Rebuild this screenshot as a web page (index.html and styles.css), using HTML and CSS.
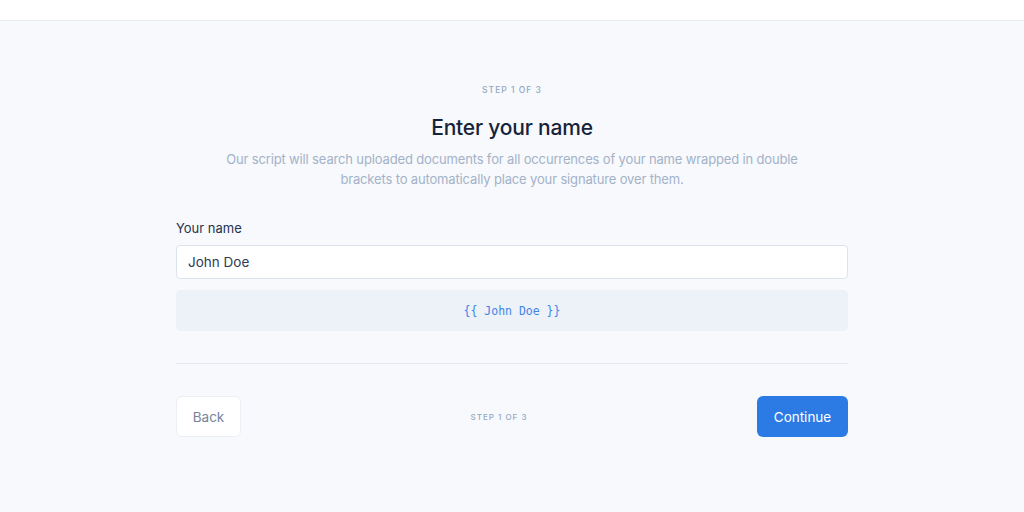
FILE: index.html
```html
<!DOCTYPE html>
<html lang="en">
<head>
<meta charset="utf-8">
<title>Enter your name</title>
<link rel="stylesheet" href="styles.css">
</head>
<body>
<header class="topbar"></header>
<main class="page">
  <section class="card">
    <div class="step">Step 1 of 3</div>
    <h1 class="title">Enter your name</h1>
    <p class="desc">Our script will search uploaded documents for all occurrences of your name wrapped in double brackets to automatically place your signature over them.</p>
    <label class="label" for="name">Your name</label>
    <input class="input" id="name" type="text" value="John Doe">
    <div class="preview">{{ John Doe }}</div>
    <hr class="divider">
    <div class="actions">
      <button class="btn btn-back">Back</button>
      <div class="step step-small">Step 1 of 3</div>
      <button class="btn btn-primary">Continue</button>
    </div>
  </section>
</main>
</body>
</html>
```

FILE: styles.css
```css
* { box-sizing: border-box; }
html, body { margin: 0; padding: 0; }
body {
  background: #f7f9fc;
  font-family: "Inter", "Lato", sans-serif;
  color: #1a2b44;
  height: 512px;
  overflow: hidden;
}
.topbar {
  height: 21px;
  background: #ffffff;
  border-bottom: 1px solid #e6ebf2;
}
.page {
  display: flex;
  justify-content: center;
  padding-top: 63px;
}
.card {
  width: 672px;
  display: flex;
  flex-direction: column;
}
.step {
  text-align: center;
  font-size: 8.5px;
  letter-spacing: 1px;
  text-transform: uppercase;
  color: #94a7c4;
  font-weight: 500;
  line-height: 12px;
}
.title {
  margin: 17px 0 0;
  text-align: center;
  font-size: 21px;
  font-weight: 500;
  line-height: 30px;
  color: #16233b;
  letter-spacing: -0.2px;
}
.desc {
  margin: 7px auto 0;
  max-width: 600px;
  text-align: center;
  font-size: 13px;
  line-height: 19.5px;
  letter-spacing: -0.15px;
  color: #a3b2c9;
  font-weight: 400;
}
.label {
  margin-top: 30px;
  font-size: 13px;
  line-height: 18px;
  color: #26344d;
}
.input {
  margin-top: 8px;
  height: 34px;
  width: 100%;
  border: 1px solid #dbe3ef;
  border-radius: 4px;
  background: #fff;
  padding: 0 11px;
  font-family: inherit;
  font-size: 13.5px;
  color: #2d3a52;
  outline: none;
}
.preview {
  margin-top: 11px;
  height: 41px;
  border-radius: 5px;
  background: #edf1f8;
  display: flex;
  align-items: center;
  justify-content: center;
  font-family: "DejaVu Sans Mono", "Liberation Mono", monospace;
  font-size: 11.5px;
  color: #3f86e8;
}
.divider {
  margin: 32px 0 0;
  border: 0;
  height: 1px;
  background: #e4e9f1;
}
.actions {
  margin-top: 32px;
  display: flex;
  align-items: center;
  justify-content: space-between;
}
.step-small { font-size: 8px; }
.btn {
  height: 41px;
  border-radius: 6px;
  font-family: inherit;
  font-size: 13.5px;
  cursor: pointer;
}
.btn-back {
  width: 65px;
  background: #fff;
  border: 1px solid #ebeff6;
  color: #75849c;
}
.btn-primary {
  width: 91px;
  background: #2c7be5;
  border: 0;
  color: #fff;
}
```
